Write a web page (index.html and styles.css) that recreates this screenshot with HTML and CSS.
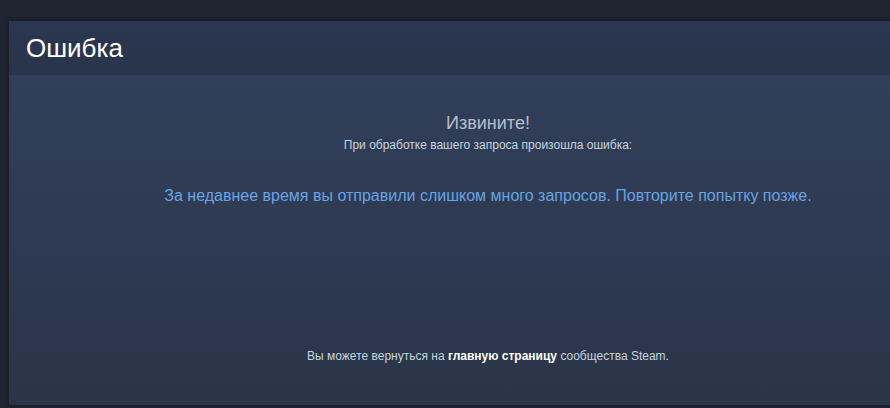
FILE: index.html
```html
<!DOCTYPE html>
<html lang="ru">
<head>
    <meta charset="UTF-8">
    <title>Ошибка</title>
    <link rel="stylesheet" href="styles.css">
</head>
<body>
    <main class="error-panel">
        <header class="error-head">
            <h1>Ошибка</h1>
        </header>

        <section class="error-body">
            <h2>Извините!</h2>
            <p class="sub">При обработке вашего запроса произошла ошибка:</p>
            <p class="message">За недавнее время вы отправили слишком много запросов. Повторите попытку позже.</p>

            <p class="back">Вы можете вернуться на <a href="#">главную страницу</a> сообщества Steam.</p>
        </section>
    </main>
</body>
</html>
```

FILE: styles.css
```css
html, body {
    margin: 0;
    padding: 0;
}

body {
    background-color: #1f2430;
    font-family: "Liberation Sans", Arial, sans-serif;
    height: 408px;
    overflow: hidden;
    padding: 21px 0 0 9px;
    box-sizing: border-box;
}

.error-panel {
    width: 958px;
    box-shadow: 0 0 3px rgba(0, 0, 0, 0.4);
}

/* header */
.error-head {
    height: 54px;
    padding-left: 17px;
    background: linear-gradient(to bottom, #2b3650, #29354a);
}

.error-head h1 {
    margin: 0;
    font-size: 26px;
    font-weight: 400;
    line-height: 54px;
    color: #ffffff;
}

/* content */
.error-body {
    height: 330px;
    padding-top: 37px;
    box-sizing: border-box;
    text-align: center;
    background: linear-gradient(to bottom, #323f5a, #2a3549);
}

.error-body h2 {
    margin: 0;
    font-size: 18px;
    line-height: 22px;
    font-weight: 400;
    color: #b6bfca;
}

.sub {
    margin: 3px 0 0 0;
    font-size: 12px;
    line-height: 16px;
    color: #c6d4df;
}

.message {
    margin: 33px 0 0 0;
    font-size: 16px;
    line-height: 20px;
    color: #67a4e3;
}

.back {
    margin: 142px 0 0 0;
    font-size: 12px;
    line-height: 16px;
    color: #c6d4df;
}

.back a {
    color: #ffffff;
    font-weight: 700;
    text-decoration: none;
}
```
